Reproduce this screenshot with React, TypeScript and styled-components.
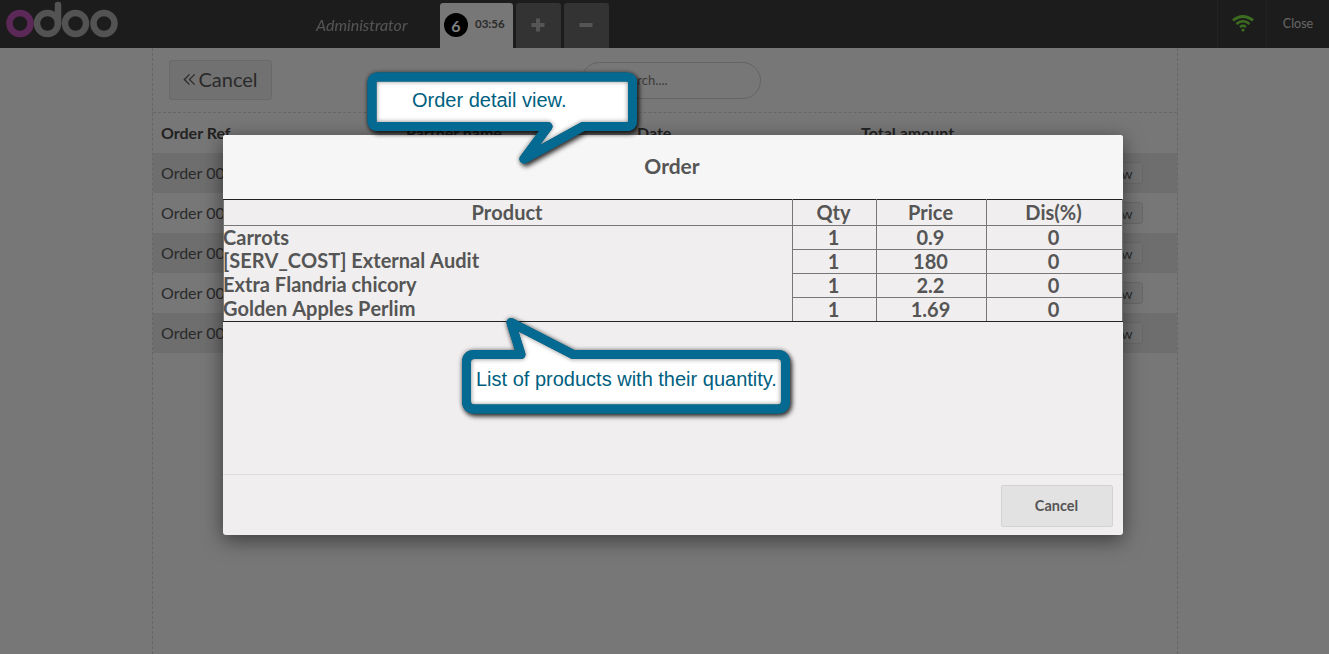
import React from "react";
import styled, { createGlobalStyle } from "styled-components";

const Global = createGlobalStyle`
  html, body { margin: 0; padding: 0; height: 100%; overflow: hidden; }
  body { font-family: Lato, "Noto Sans", sans-serif; color: #555; background: #f0eeee; }
  #root { height: 100%; }
`;

const Screen = styled.div`
  position: relative;
  width: 1329px;
  height: 654px;
  overflow: hidden;
  background: #f0eeee;
  display: flex;
  flex-direction: column;
`;

const TopBar = styled.header`
  height: 48px;
  flex: none;
  background: #393939;
  display: flex;
  align-items: stretch;
`;

const Logo = styled.svg`
  width: 120px;
  height: 48px;
  flex: none;
`;

const UserName = styled.span`
  margin-left: 196px;
  width: 124px;
  flex: none;
  align-self: center;
  font-size: 16px;
  font-style: italic;
  color: #fff;
  opacity: 0.55;
`;

const OrderTab = styled.div`
  width: 73px;
  height: 45px;
  margin-top: 3px;
  box-sizing: border-box;
  padding-left: 4px;
  border-radius: 3px 3px 0 0;
  background: #f0eeee;
  display: flex;
  align-items: center;
  gap: 7px;
  color: #555;
  font-size: 11.5px;
  font-weight: 700;
`;

const Badge = styled.span`
  width: 24px;
  height: 24px;
  margin-top: -1px;
  border-radius: 50%;
  background: #000;
  color: #fff;
  font-size: 16px;
  font-weight: 700;
  display: flex;
  align-items: center;
  justify-content: center;
`;

const Clock = styled.span`
  margin-top: -4px;
`;

const TabButton = styled.div`
  width: 45px;
  height: 45px;
  margin-top: 3px;
  margin-left: 3px;
  box-sizing: border-box;
  padding: 0 1px 2px 0;
  border-radius: 3px 3px 0 0;
  background: #666;
  display: flex;
  align-items: center;
  justify-content: center;
  color: #aaa;
`;

const BarSpacer = styled.div`
  flex: 1;
`;

const StatusCell = styled.div<{ $width: number }>`
  width: ${(p) => p.$width}px;
  flex: none;
  border-left: 1px solid #444;
  box-sizing: border-box;
  display: flex;
  align-items: center;
  justify-content: center;
  font-size: 12.5px;
  color: #ccc;
  padding-bottom: 2px;
`;

const WifiIcon = styled.svg`
  margin-left: 2px;
`;

const Panel = styled.main`
  width: 1026px;
  box-sizing: border-box;
  margin-left: 152px;
  flex: 1;
  border-left: 1px dashed #cfcccc;
  border-right: 1px dashed #cfcccc;
  display: flex;
  flex-direction: column;
`;

const Controls = styled.div`
  height: 65px;
  flex: none;
  box-sizing: border-box;
  border-bottom: 1px dashed #cfcccc;
  display: flex;
  align-items: flex-start;
  padding-left: 16px;
`;

const BackButton = styled.div`
  width: 103px;
  height: 40px;
  margin-top: 12px;
  padding-bottom: 2px;
  box-sizing: border-box;
  background: #e2e2e2;
  border: 1px solid #d3d3d3;
  border-radius: 3px;
  display: flex;
  align-items: center;
  justify-content: center;
  gap: 2px;
  font-size: 20px;
  color: #555;
`;

const SearchBox = styled.div`
  width: 180px;
  height: 37px;
  margin-top: 14px;
  margin-left: 309px;
  box-sizing: border-box;
  background: #f0eeee;
  border: 1px solid #c8c8c8;
  border-radius: 20px;
  padding: 0 0 1px 35px;
  display: flex;
  align-items: center;
  font-size: 13px;
  color: #777;
`;

const HeadRow = styled.div`
  height: 40px;
  flex: none;
  display: grid;
  grid-template-columns: 245px 231px 224px 1fr;
  padding-left: 8px;
  padding-top: 10px;
  box-sizing: border-box;
  font-size: 16px;
  font-weight: 700;
  color: #444;
`;

const DataRow = styled.div<{ $dark: boolean }>`
  height: 40px;
  flex: none;
  box-sizing: border-box;
  padding: 0 34px 2px 8px;
  display: flex;
  align-items: center;
  justify-content: space-between;
  font-size: 16px;
  color: #555;
  background: ${(p) => (p.$dark ? "#dcdcdc" : "#f0eeee")};
`;

const ViewButton = styled.span`
  width: 52px;
  height: 22px;
  margin-top: 2px;
  box-sizing: border-box;
  border: 1px solid #d0d0d0;
  background: #e2e2e2;
  border-radius: 3px;
  font-size: 14px;
  display: flex;
  align-items: center;
  justify-content: center;
  color: #555;
`;

const Dim = styled.div`
  position: absolute;
  inset: 0;
  background: rgba(0, 0, 0, 0.5);
`;

const Modal = styled.section`
  position: absolute;
  left: 223px;
  top: 135px;
  width: 900px;
  height: 400px;
  background: #f0eeee;
  border-radius: 3px;
  box-shadow: 0 5px 20px rgba(0, 0, 0, 0.5);
  display: flex;
  flex-direction: column;
`;

const ModalHeader = styled.div`
  height: 64px;
  flex: none;
  box-sizing: border-box;
  padding: 0 2px 4px 0;
  background: #f6f6f6;
  border-radius: 3px 3px 0 0;
  display: flex;
  align-items: center;
  justify-content: center;
  font-size: 21px;
  font-weight: 700;
  color: #555;
`;

const ModalBody = styled.div`
  flex: 1;
`;

const ModalFooter = styled.div`
  height: 61px;
  flex: none;
  box-sizing: border-box;
  border-top: 1px solid #dcdcdc;
  display: flex;
  justify-content: flex-end;
  padding: 10px 10px 0 0;
`;

const FooterButton = styled.div`
  width: 112px;
  height: 42px;
  box-sizing: border-box;
  padding: 0 1px 1px 0;
  background: #e2e2e2;
  border: 1px solid #d3d3d3;
  border-radius: 2px;
  display: flex;
  align-items: center;
  justify-content: center;
  font-size: 14.5px;
  font-weight: 700;
  color: #555;
`;

const Table = styled.table`
  width: 899px;
  table-layout: fixed;
  border-collapse: collapse;
  font-size: 20px;
  font-weight: 700;
  font-kerning: none;
  color: #555;
  border: 1px solid #222;
`;

const Th = styled.th<{ $w: number }>`
  width: ${(p) => p.$w}px;
  height: 26px;
  padding: 0 2px 0 0;
  box-sizing: border-box;
  font-weight: 700;
  line-height: 25px;
  vertical-align: top;
  border: 1px solid #777;
  border-top-color: #222;
  text-align: center;
`;

const NamesCell = styled.td`
  padding: 0;
  vertical-align: top;
  text-align: left;
  line-height: 23.7px;
  border: 1px solid #777;
  border-bottom-color: #222;
`;

const NameLine = styled.div`
  margin: -0.3px 0 0.3px -1px;
`;

const NumCell = styled.td<{ $last: boolean }>`
  height: 24px;
  padding: 0 2px 0 0;
  box-sizing: border-box;
  text-align: center;
  line-height: 23px;
  border: 1px solid #777;
  border-bottom-color: ${(p) => (p.$last ? "#222" : "#777")};
`;

const CalloutWrap = styled.div<{ $x: number; $y: number; $w: number; $h: number }>`
  position: absolute;
  left: ${(p) => p.$x}px;
  top: ${(p) => p.$y}px;
  width: ${(p) => p.$w}px;
  height: ${(p) => p.$h}px;
`;

const CalloutSvg = styled.svg`
  position: absolute;
  inset: 0;
  overflow: visible;
`;

const CalloutText = styled.span<{ $x: number; $y: number }>`
  position: absolute;
  left: ${(p) => p.$x}px;
  top: ${(p) => p.$y}px;
  font-family: "Liberation Sans", Arial, sans-serif;
  font-size: 20px;
  line-height: 24px;
  white-space: nowrap;
  color: #005f80;
`;

const rows = ["Order 0001", "Order 0002", "Order 0003", "Order 0004", "Order 0005"];
const products = ["Carrots", "[SERV_COST] External Audit", "Extra Flandria chicory", "Golden Apples Perlim"];
const lines = [
  ["1", "0.9", "0"],
  ["1", "180", "0"],
  ["1", "2.2", "0"],
  ["1", "1.69", "0"],
];

function Callout(props: { x: number; y: number; w: number; h: number; d: string; tx: number; ty: number; id: string; text: string }) {
  return (
    <CalloutWrap $x={props.x} $y={props.y} $w={props.w} $h={props.h}>
      <CalloutSvg width={props.w} height={props.h} viewBox={`0 0 ${props.w} ${props.h}`}>
        <defs>
          <filter id={props.id} x="-10%" y="-20%" width="120%" height="150%">
            <feDropShadow dx="2" dy="3" stdDeviation="2.5" floodColor="#000" floodOpacity="0.75" />
          </filter>
          <filter id={`${props.id}-soft`} x="-10%" y="-20%" width="120%" height="150%">
            <feGaussianBlur stdDeviation="2" />
          </filter>
        </defs>
        <path d={props.d} fill="#fff" stroke="#046a92" strokeWidth="9" strokeLinejoin="round" filter={`url(#${props.id})`} />
        <path d={props.d} fill="none" stroke="#000" strokeOpacity="0.4" strokeWidth="10" strokeLinejoin="round" filter={`url(#${props.id}-soft)`} />
        <path d={props.d} fill="none" stroke="#046a92" strokeWidth="9" strokeLinejoin="round" />
      </CalloutSvg>
      <CalloutText $x={props.tx} $y={props.ty}>{props.text}</CalloutText>
    </CalloutWrap>
  );
}

export default function App() {
  return (
    <Screen>
      <Global />
      <TopBar>
        <Logo viewBox="0 0 120 48" aria-label="odoo">
          <g fill="none" strokeWidth="6.5">
            <circle cx="20" cy="23.5" r="10.5" stroke="#b850b0" />
            <g stroke="#a6a6a6">
              <circle cx="47.5" cy="23.5" r="10.5" />
              <path d="M58 24V5" strokeLinecap="round" />
              <circle cx="75.5" cy="23.5" r="10.5" />
              <circle cx="104" cy="23.5" r="10.5" />
            </g>
          </g>
        </Logo>
        <UserName>Administrator</UserName>
        <OrderTab>
          <Badge>6</Badge>
          <Clock>03:56</Clock>
        </OrderTab>
        <TabButton>
          <svg width="16" height="16" viewBox="0 0 16 16"><path d="M8 1.5v13M1.5 8h13" stroke="currentColor" strokeWidth="4" /></svg>
        </TabButton>
        <TabButton>
          <svg width="16" height="16" viewBox="0 0 16 16"><path d="M1.5 8h13" stroke="currentColor" strokeWidth="4" /></svg>
        </TabButton>
        <BarSpacer />
        <StatusCell $width={49}>
          <WifiIcon width="24" height="18" viewBox="0 0 24 18" fill="none" stroke="#78d840">
            <path d="M2 6.5C8 1 16 1 22 6.5" strokeWidth="3" />
            <path d="M5.5 10C9.5 6.5 14.5 6.5 18.5 10" strokeWidth="2.6" />
            <path d="M9 13C10.8 11.6 13.2 11.6 15 13" strokeWidth="2.4" />
            <circle cx="12" cy="16" r="1.6" fill="#78d840" stroke="none" />
          </WifiIcon>
        </StatusCell>
        <StatusCell $width={63}>Close</StatusCell>
      </TopBar>
      <Panel>
        <Controls>
          <BackButton>
            <svg width="13" height="13" viewBox="0 0 14 14" fill="none" stroke="currentColor" strokeWidth="1.4">
              <path d="M7 1.5 1.5 7 7 12.5M12.5 1.5 7 7l5.5 5.5" />
            </svg>
            Cancel
          </BackButton>
          <SearchBox>Search....</SearchBox>
        </Controls>
        <HeadRow>
          <span>Order Ref</span>
          <span>Partner name</span>
          <span>Date</span>
          <span>Total amount</span>
        </HeadRow>
        {rows.map((r, i) => (
          <DataRow key={r} $dark={i % 2 === 0}>
            <span>{r}</span>
            <ViewButton>View</ViewButton>
          </DataRow>
        ))}
      </Panel>
      <Dim />
      <Modal>
        <ModalHeader>Order</ModalHeader>
        <ModalBody>
          <Table>
            <thead>
              <tr>
                <Th $w={569}>Product</Th>
                <Th $w={84}>Qty</Th>
                <Th $w={110}>Price</Th>
                <Th $w={136}>Dis(%)</Th>
              </tr>
            </thead>
            <tbody>
              {lines.map((l, i) => (
                <tr key={i}>
                  {i === 0 && (
                    <NamesCell rowSpan={4}>
                      {products.map((p) => (
                        <NameLine key={p}>{p}</NameLine>
                      ))}
                    </NamesCell>
                  )}
                  {l.map((v, j) => (
                    <NumCell key={j} $last={i === 3}>{v}</NumCell>
                  ))}
                </tr>
              ))}
            </tbody>
          </Table>
        </ModalBody>
        <ModalFooter>
          <FooterButton>Cancel</FooterButton>
        </ModalFooter>
      </Modal>
      <Callout
        id="c1" x={367} y={72} w={270} h={92} tx={45} ty={16} text="Order detail view."
        d="M11 5H259.5Q265.5 5 265.5 11V48.5Q265.5 54.5 259.5 54.5H216L157 87L181 54.5H11Q5 54.5 5 48.5V11Q5 5 11 5Z"
      />
      <Callout
        id="c2" x={461} y={318} w={330} h={96} tx={15} ty={49} text="List of products with their quantity."
        d="M13.5 36.5H60L50 4.5L112 36.5H316.5Q324.5 36.5 324.5 44.5V83Q324.5 91 316.5 91H13.5Q5.5 91 5.5 83V44.5Q5.5 36.5 13.5 36.5Z"
      />
    </Screen>
  );
}
